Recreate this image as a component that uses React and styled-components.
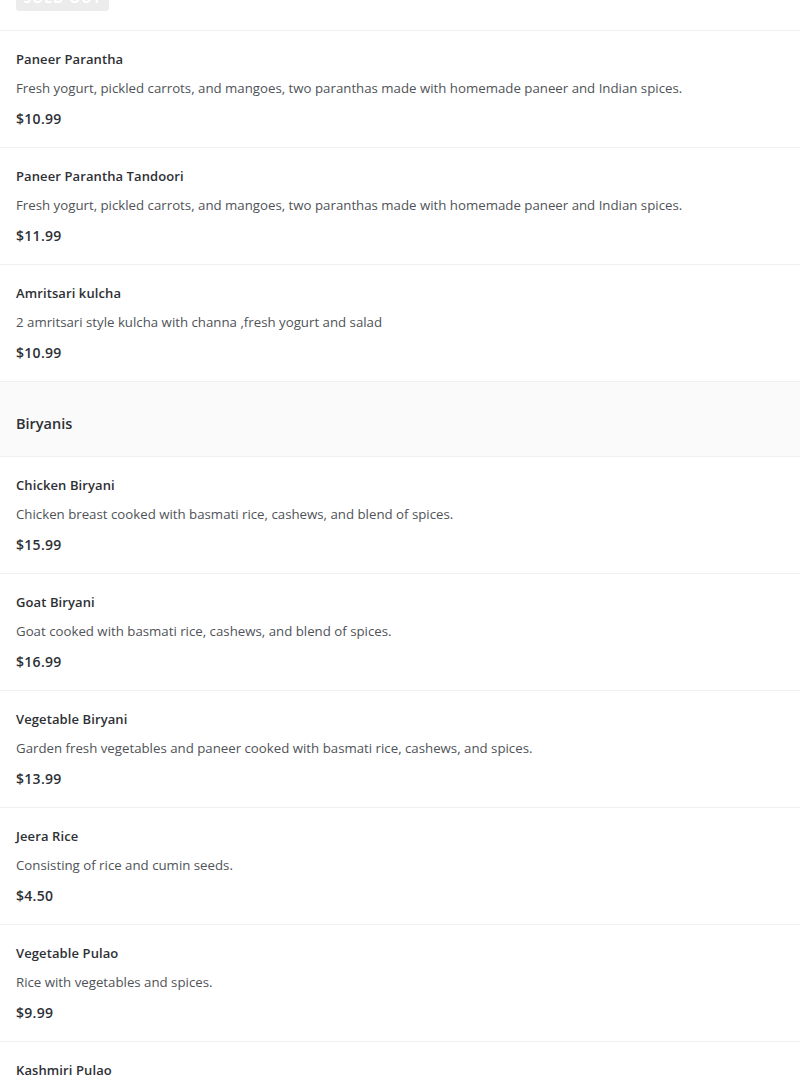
import React from "react";
import styled, { createGlobalStyle } from "styled-components";

const GlobalStyle = createGlobalStyle`
  body {
    margin: 0;
    background: #fff;
    font-family: "Open Sans", "Noto Sans", sans-serif;
  }
`;

const sections = [
  {
    items: [
      {
        name: "Paneer Parantha",
        desc: "Fresh yogurt, pickled carrots, and mangoes, two paranthas made with homemade paneer and Indian spices.",
        price: "$10.99",
      },
      {
        name: "Paneer Parantha Tandoori",
        desc: "Fresh yogurt, pickled carrots, and mangoes, two paranthas made with homemade paneer and Indian spices.",
        price: "$11.99",
      },
      {
        name: "Amritsari kulcha",
        desc: "2 amritsari style kulcha with channa ,fresh yogurt and salad",
        price: "$10.99",
      },
    ],
  },
  {
    title: "Biryanis",
    items: [
      {
        name: "Chicken Biryani",
        desc: "Chicken breast cooked with basmati rice, cashews, and blend of spices.",
        price: "$15.99",
      },
      {
        name: "Goat Biryani",
        desc: "Goat cooked with basmati rice, cashews, and blend of spices.",
        price: "$16.99",
      },
      {
        name: "Vegetable Biryani",
        desc: "Garden fresh vegetables and paneer cooked with basmati rice, cashews, and spices.",
        price: "$13.99",
      },
      {
        name: "Jeera Rice",
        desc: "Consisting of rice and cumin seeds.",
        price: "$4.50",
      },
      {
        name: "Vegetable Pulao",
        desc: "Rice with vegetables and spices.",
        price: "$9.99",
      },
      {
        name: "Kashmiri Pulao",
        desc: "Rice cooked with nuts, raisins and fruits, flavoured with saffron and cardamom.",
        price: "$11.99",
      },
    ],
  },
];

const App = () => (
  <Page>
    <GlobalStyle />
    <SoldOutRow>
      <SoldOut>SOLD OUT</SoldOut>
    </SoldOutRow>
    {sections.map((section, sIdx) => (
      <React.Fragment key={sIdx}>
        {section.title && <CategoryHeader>{section.title}</CategoryHeader>}
        {section.items.map((item) => (
          <Item key={item.name}>
            <Name>{item.name}</Name>
            <Desc>{item.desc}</Desc>
            <Price>{item.price}</Price>
          </Item>
        ))}
      </React.Fragment>
    ))}
  </Page>
);

export default App;

const Page = styled.div`
  width: 800px;
  overflow: hidden;
`;

const SoldOutRow = styled.div`
  height: 30px;
  padding: 0 16px;
  display: flex;
  align-items: flex-end;
`;

const SoldOut = styled.div`
  margin-bottom: 19px;
  width: 93px;
  height: 28px;
  background: #ececec;
  border-radius: 3px;
  color: #fff;
  font-size: 14px;
  font-weight: 700;
  letter-spacing: 1px;
  display: flex;
  align-items: center;
  justify-content: center;
`;

const Item = styled.div`
  border-top: 1px solid #f0f0f0;
  padding: 19px 16px 20px;
  height: 77px;
`;

const Name = styled.div`
  font-size: 13px;
  line-height: 18px;
  font-weight: 600;
  letter-spacing: 0.1px;
  color: #2d3035;
  margin-bottom: 11px;
`;

const Desc = styled.div`
  font-size: 13.25px;
  line-height: 18px;
  color: #4f5358;
  margin-bottom: 12px;
  white-space: nowrap;
`;

const Price = styled.div`
  font-size: 14px;
  line-height: 20px;
  font-weight: 600;
  letter-spacing: 0.3px;
  color: #2d3035;
`;

const CategoryHeader = styled.div`
  border-top: 1px solid #f0f0f0;
  background: #fafafa;
  height: 75px;
  box-sizing: border-box;
  padding: 32px 16px 0;
  font-size: 14.5px;
  line-height: 20px;
  font-weight: 600;
  color: #2d3035;
`;
